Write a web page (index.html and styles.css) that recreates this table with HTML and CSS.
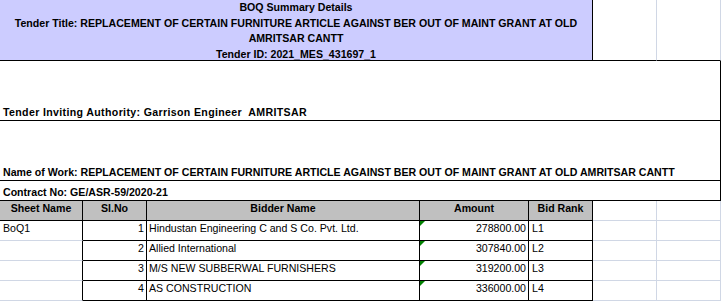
FILE: index.html
```html
<!DOCTYPE html>
<html>
<head>
<meta charset="utf-8">
<link rel="stylesheet" href="styles.css">
</head>
<body>
<div class="sheet">
  <div class="c title"><div>BOQ Summary Details</div><div>Tender Title: REPLACEMENT OF CERTAIN FURNITURE ARTICLE AGAINST BER OUT OF MAINT GRANT AT OLD</div><div>AMRITSAR CANTT</div><div>Tender ID: 2021_MES_431697_1</div></div>
  <div class="c grid top-blank"></div>
  <div class="c grid top-blank"></div>

  <div class="c wide loose">Tender Inviting Authority: Garrison Engineer&nbsp; AMRITSAR</div>
  <div class="c wide">Name of Work: REPLACEMENT OF CERTAIN FURNITURE ARTICLE AGAINST BER OUT OF MAINT GRANT AT OLD AMRITSAR CANTT</div>
  <div class="c wide">Contract No: GE/ASR-59/2020-21</div>

  <div class="c head">Sheet Name</div>
  <div class="c head">Sl.No</div>
  <div class="c head">Bidder Name</div>
  <div class="c head">Amount</div>
  <div class="c head">Bid Rank</div>
  <div class="c grid"></div>
  <div class="c grid"></div>

  <div class="c first">BoQ1</div>
  <div class="c cell num">1</div>
  <div class="c cell">Hindustan Engineering C and S Co. Pvt. Ltd.</div>
  <div class="c cell num amt">278800.00</div>
  <div class="c cell rank">L1</div>
  <div class="c grid"></div>
  <div class="c grid"></div>

  <div class="c first"></div>
  <div class="c cell num">2</div>
  <div class="c cell">Allied International</div>
  <div class="c cell num amt">307840.00</div>
  <div class="c cell rank">L2</div>
  <div class="c grid"></div>
  <div class="c grid"></div>

  <div class="c first"></div>
  <div class="c cell num">3</div>
  <div class="c cell">M/S NEW SUBBERWAL FURNISHERS</div>
  <div class="c cell num amt">319200.00</div>
  <div class="c cell rank">L3</div>
  <div class="c grid"></div>
  <div class="c grid"></div>

  <div class="c first"></div>
  <div class="c cell num">4</div>
  <div class="c cell">AS CONSTRUCTION</div>
  <div class="c cell num amt">336000.00</div>
  <div class="c cell rank">L4</div>
  <div class="c grid"></div>
  <div class="c grid"></div>
</div>
</body>
</html>
```

FILE: styles.css
```css
html, body {
  margin: 0;
  padding: 0;
  background: #ffffff;
}

.sheet {
  display: grid;
  grid-template-columns: 83px 64px 273px 109px 64px 64px 64px;
  grid-template-rows: 61px 60px 60px 20px 20px 20px 20px 20px 20px;
  width: 721px;
  font-family: "Liberation Sans", Arial, sans-serif;
  font-size: 10.6px;
  color: #000000;
}

.c {
  box-sizing: border-box;
  line-height: 15px;
  white-space: nowrap;
  overflow: visible;
  position: relative;
}

.title {
  grid-column: 1 / 6;
  background: #ccccff;
  border-right: 1px solid #000000;
  border-bottom: 1px solid #000000;
  font-weight: bold;
  text-align: center;
  line-height: 15.7px;
}

.grid {
  border-right: 1px solid #d0d7e5;
  border-bottom: 1px solid #d0d7e5;
}

.top-blank {
  border-bottom: 1px solid #000000;
}

.wide {
  grid-column: 1 / 8;
  display: flex;
  align-items: flex-end;
  padding-left: 3px;
  font-weight: bold;
  white-space: pre;
  border-right: 1px solid #000000;
  border-bottom: 1px solid #000000;
}

.loose {
  letter-spacing: 0.35px;
}

.head {
  background: #c0c0c0;
  font-weight: bold;
  text-align: center;
  border-right: 1px solid #000000;
  border-bottom: 1px solid #000000;
}

.first {
  padding-left: 3px;
  border-right: 1px solid #000000;
  border-bottom: 1px solid #d0d7e5;
}

.cell {
  padding-left: 2px;
  border-right: 1px solid #000000;
  border-bottom: 1px solid #000000;
}

.num {
  text-align: right;
  padding-left: 0;
  padding-right: 2px;
}

.rank {
  padding-left: 3px;
}

.amt::before {
  content: "";
  position: absolute;
  left: 0;
  top: 0;
  border-top: 5px solid #008000;
  border-right: 5px solid transparent;
}
```
